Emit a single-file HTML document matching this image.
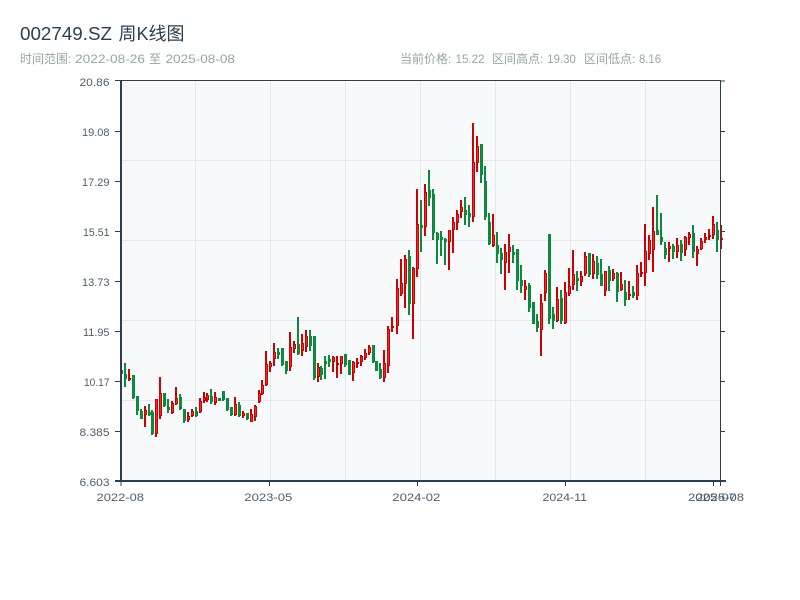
<!DOCTYPE html>
<html><head><meta charset="utf-8">
<style>
html,body{margin:0;padding:0;background:#fff;width:800px;height:600px;overflow:hidden}
svg{position:absolute;left:0;top:0}
text{font-family:"Liberation Sans","Noto Sans CJK SC",sans-serif;white-space:pre}
</style></head><body>
<svg id="s" width="800" height="600" viewBox="0 0 800 600" xmlns="http://www.w3.org/2000/svg">
<g font-size="18" fill="#2c3e50">
<text x="20" y="40" textLength="92" lengthAdjust="spacingAndGlyphs">002749.SZ</text>
<text x="118.5" y="40" textLength="66" lengthAdjust="spacingAndGlyphs">周K线图</text>
</g>
<g font-size="12" fill="#95a5a6">
<text x="20" y="63">时间范围:</text>
<text x="75" y="63" textLength="70" lengthAdjust="spacingAndGlyphs">2022-08-26</text>
<text x="149" y="63">至</text>
<text x="165.5" y="63" textLength="69.5" lengthAdjust="spacingAndGlyphs">2025-08-08</text>
<text x="400" y="63">当前价格:</text>
<text x="455.5" y="63" textLength="29" lengthAdjust="spacingAndGlyphs">15.22</text>
<text x="492" y="63">区间高点:</text>
<text x="547.3" y="63" textLength="28.5" lengthAdjust="spacingAndGlyphs">19.30</text>
<text x="584" y="63">区间低点:</text>
<text x="639" y="63" textLength="22" lengthAdjust="spacingAndGlyphs">8.16</text>
</g>
<rect x="120" y="80" width="601" height="401" fill="#f8f9fa"/>
<path d="M195.5 81V480M270.5 81V480M345.5 81V480M420.5 81V480M495.5 81V480M570.5 81V480M645.5 81V480M121 160.5H720M121 240.5H720M121 320.5H720M121 400.5H720" stroke="#e4e7ec" stroke-width="1" fill="none"/>
<g id="c" shape-rendering="crispEdges"></g>
<path d="M115 80.5H721M720.5 80V482M115 481H726M121 80V486M269.5 481V486M417.5 481V486M565.5 481V486M713.5 481V486M720.5 481V486" stroke="#2c3e50" stroke-width="1" fill="none"/>
<path d="M121 80V481M115 481H726" stroke="#2c3e50" stroke-width="2" fill="none"/>
<path d="M115 131.5H121M115 181.5H121M115 231.5H121M115 281.5H121M115 331.5H121M115 381.5H121M115 431.5H121M720 131.5H725M720 181.5H725M720 231.5H725M720 281.5H725M720 331.5H725M720 381.5H725M720 431.5H725M720 81H725" stroke="#2c3e50" stroke-width="1" fill="none"/>
<g font-size="11" fill="#4f5d6e">
<text x="79.5" y="86" textLength="30" lengthAdjust="spacingAndGlyphs">20.86</text>
<text x="82" y="136" textLength="27.5" lengthAdjust="spacingAndGlyphs">19.08</text>
<text x="82" y="186" textLength="27.5" lengthAdjust="spacingAndGlyphs">17.29</text>
<text x="83" y="236" textLength="26.5" lengthAdjust="spacingAndGlyphs">15.51</text>
<text x="82" y="286" textLength="27.5" lengthAdjust="spacingAndGlyphs">13.73</text>
<text x="83" y="336" textLength="26.5" lengthAdjust="spacingAndGlyphs">11.95</text>
<text x="84" y="386" textLength="25.5" lengthAdjust="spacingAndGlyphs">10.17</text>
<text x="79.5" y="436" textLength="30" lengthAdjust="spacingAndGlyphs">8.385</text>
<text x="79.5" y="486" textLength="30" lengthAdjust="spacingAndGlyphs">6.603</text>
</g>
<g font-size="11" fill="#4f5d6e">
<text x="96.5" y="501" textLength="47.5" lengthAdjust="spacingAndGlyphs">2022-08</text>
<text x="244.3" y="501" textLength="48" lengthAdjust="spacingAndGlyphs">2023-05</text>
<text x="392.3" y="501" textLength="48" lengthAdjust="spacingAndGlyphs">2024-02</text>
<text x="542.5" y="501" textLength="44.5" lengthAdjust="spacingAndGlyphs">2024-11</text>
<text x="688" y="501" textLength="48" lengthAdjust="spacingAndGlyphs">2025-07</text>
<text x="696" y="501" textLength="48" lengthAdjust="spacingAndGlyphs">2025-08</text>
</g>
</svg>
<script>
var A=[
"g370,374,370,374","g363,387,374,379","r369,381,378,380","g375,399,375,398","g396,415,396,411","g409,419,411,419","r406,427,410,415","g404,416,412,415","g410,435,412,434","r399,437,399,434",
"r377,419,393,416","g393,407,393,406","g399,413,407,410","r401,414,403,413","r387,405,398,404","g394,410,397,409","g409,423,409,421","r412,422,416,420","r409,417,411,416","g407,417,411,416",
"r398,413,401,412","r392,403,397,401","r393,402,395,400","g389,404,396,402","r392,405,397,403","g398,401,398,401","g391,401,391,400","g398,411,398,410","g407,416,407,415","r397,416,404,415",
"g402,417,405,416","r411,418,413,416","g413,420,413,419","r409,422,414,422","r405,421,406,417","r390,403,393,402","r380,395,385,394","r351,386,364,385","r361,372,363,367","r343,366,352,359",
"g348,359,352,355","g348,366,348,365","g361,374,361,371","r332,371,347,367","r341,353,344,349","g317,355,344,354","r334,356,343,351","r330,352,336,347","g330,351,336,346","g336,380,336,378",
"r363,382,367,377","g366,380,368,375","g356,379,361,364","g355,367,359,362","r356,372,357,362","r356,378,363,365","r356,374,356,364","g354,367,354,365","g360,375,360,375","r361,381,362,373",
"r358,368,362,364","r355,366,356,362","r349,360,353,358","r345,355,347,353","g345,363,345,362","g361,371,361,371","g363,379,369,378","r350,382,363,378","r326,373,329,366","r317,332,326,328"];
var B=[
"r279,334,288,326","r259,296,283,294","r255,308,259,284","g250,315,256,304","r267,339,268,304","r189,277,224,269","g200,252,225,228","r184,236,192,227","g170,206,190,198","g189,240,194,233",
"g232,264,233,240","g231,256,237,240","g238,265,239,242","r230,270,230,242","r217,253,222,230","r210,230,214,223","r200,218,207,212","g197,225,210,215","g205,227,213,217","r123,222,162,217",
"r136,172,146,163","g144,183,144,175","g166,220,181,217","g213,245,222,244","r214,247,235,246","g232,263,245,254","g248,274,253,260","r244,290,252,263","r234,273,247,252","g245,263,252,255",
"g249,290,249,281","g265,293,280,286","r280,300,286,290","g283,312,285,308","g302,324,302,324","g314,332,321,328","r294,356,303,330","r270,301,273,293","g234,324,234,319","g307,329,314,321",
"r287,322,299,321","g290,324,298,321","r282,324,292,323","r268,296,286,294","r250,290,274,285","g271,291,278,281","r271,286,276,282","r252,276,256,274","g253,277,253,275","r254,279,261,274",
"g256,279,263,275","g259,286,274,286","r271,296,271,291","g266,291,270,281","r269,281,273,279","g272,302,273,292","r272,291,284,290","g280,306,292,300","r281,300,294,296","g286,298,292,296",
"r265,300,273,296","r262,277,272,274","r224,286,251,273","r235,260,240,254","r207,272,231,250","g195,235,230,235","g213,245,237,242","g242,259,248,255","r242,262,246,249","g244,259,246,252",
"r238,258,245,252","g240,261,244,253","r236,256,237,250","r232,245,234,238","g225,258,233,252","r246,266,249,254","r238,250,241,249","r233,243,237,240","r229,240,235,237","r216,239,224,235",
"g222,252,230,240","r225,249,238,240"];
var h="";
function d(s,x){
 var X=Math.round(x),g=s[0]=="g",v=s.slice(1).split(",").map(Number),t=v[0],b=v[1],o=v[2],c=v[3];
 var col=g?"#0a8a3c":"#cc0000";
 h+='<rect x="'+(X-1)+'" y="'+t+'" width="2" height="'+(b-t)+'" fill="'+col+'"/>';
 h+='<rect x="'+(X-1)+'" y="'+o+'" width="3" height="'+Math.max(c-o,1)+'" fill="'+col+'"/>';
 if(!g&&c-o>2)h+='<rect x="'+X+'" y="'+(o+1)+'" width="1" height="'+(c-o-2)+'" fill="#f02828"/>';
}
A.forEach(function(s,i){d(s,121+i*3.93)});
B.forEach(function(s,i){d(s,396.7+i*4)});
document.getElementById("c").innerHTML=h;
</script>
</body></html>
